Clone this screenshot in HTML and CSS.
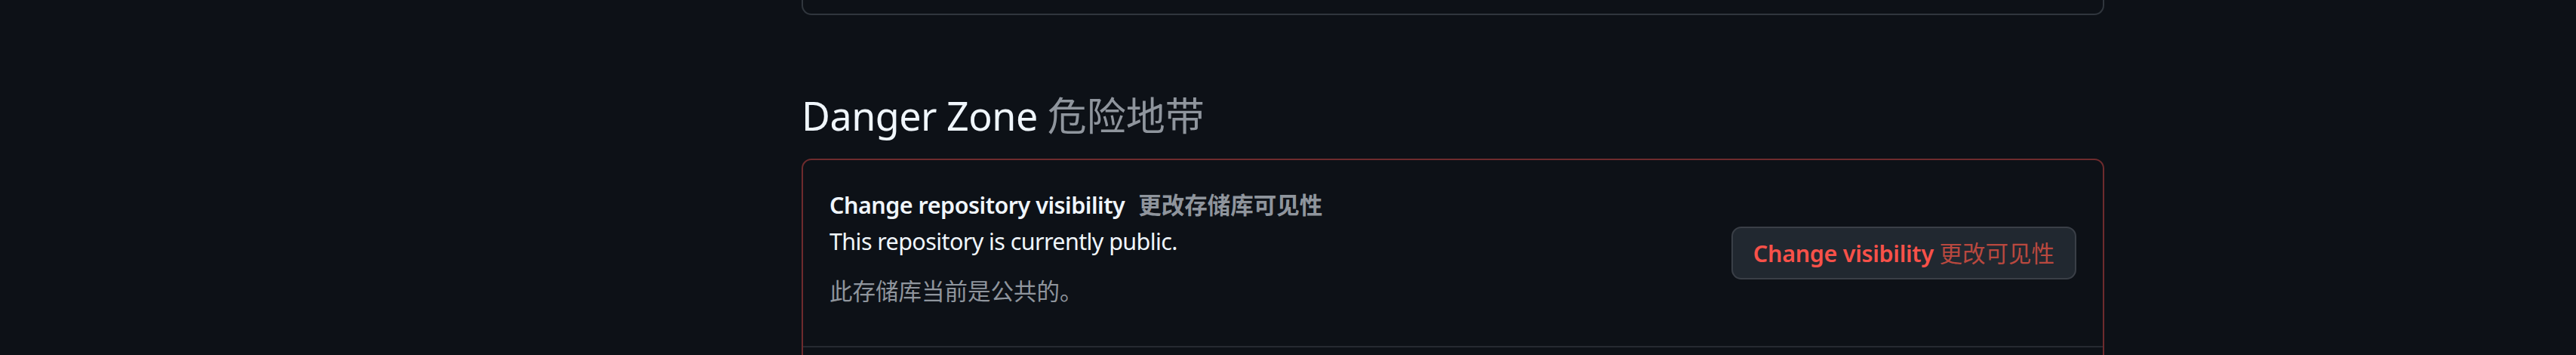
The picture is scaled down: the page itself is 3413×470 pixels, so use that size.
FILE: index.html
```html
<!DOCTYPE html>
<html lang="en">
<head>
<meta charset="utf-8">
<title>Settings · Danger Zone</title>
<link rel="stylesheet" href="styles.css">
</head>
<body>
<div class="layout">
  <main class="main">
    <div class="box box-prev"></div>

    <h2 class="subhead">Danger Zone <span class="zh">危险地带</span></h2>

    <div class="box box-danger">
      <div class="row">
        <div class="row-text">
          <div class="row-title">Change repository visibility<span class="zh-title">更改存储库可见性</span></div>
          <p class="row-desc">This repository is currently public.</p>
          <p class="row-desc-zh">此存储库当前是公共的。</p>
        </div>
        <button class="btn-danger" type="button">Change visibility <span class="zh-btn">更改可见性</span></button>
      </div>
      <div class="row row-next"></div>
    </div>
  </main>
</div>
</body>
</html>
```

FILE: styles.css
```css
html, body {
  margin: 0;
  padding: 0;
  height: 470px;
  overflow: hidden;
  background: #0d1117;
}

body {
  font-family: "Noto Sans", "Noto Sans CJK SC", sans-serif;
  color: #f0f6fc;
  font-size: 30.5px;
  line-height: 48px;
}

.layout {
  display: flex;
  padding-left: 1062px;
}

.main {
  width: 1726px;
  display: flex;
  flex-direction: column;
}

.box {
  border: 2px solid #30363d;
  border-radius: 13px;
}

.box-prev {
  height: 18px;
  border-top: none;
  border-radius: 0 0 13px 13px;
}

.subhead {
  margin: 94px 0 18px;
  font-size: 52px;
  line-height: 78px;
  font-weight: 400;
  color: #f0f6fc;
  letter-spacing: -0.5px;
}

.zh {
  color: #8f959d;
  letter-spacing: 0;
}

.box-danger {
  border-color: #6e2b2d;
}

.row {
  display: flex;
  align-items: center;
  justify-content: space-between;
  padding: 35px 35px;
  border-top: 2px solid #262a31;
}

.row:first-child {
  border-top: none;
}

.row-next {
  height: 120px;
}

.row-text {
  display: flex;
  flex-direction: column;
}

.row-title {
  font-weight: 600;
  color: #f0f6fc;
  letter-spacing: -0.5px;
}

.zh-title {
  margin-left: 18px;
  color: #8f959d;
  font-weight: 700;
  letter-spacing: 0;
}

.row-desc {
  margin: 0;
  letter-spacing: -0.6px;
}

.row-desc-zh {
  margin: 18px 0 14px;
  color: #8f959d;
}

.btn-danger {
  height: 70px;
  box-sizing: border-box;
  padding: 0 27px;
  border: 2px solid #3a3f47;
  border-radius: 13px;
  background: #212830;
  color: #f85149;
  font-family: "Noto Sans", "Noto Sans CJK SC", sans-serif;
  font-size: 30.5px;
  font-weight: 600;
  line-height: 48px;
  white-space: nowrap;
  letter-spacing: -0.3px;
}

.zh-btn {
  color: #b9483f;
  font-weight: 400;
  letter-spacing: 0;
}
```
